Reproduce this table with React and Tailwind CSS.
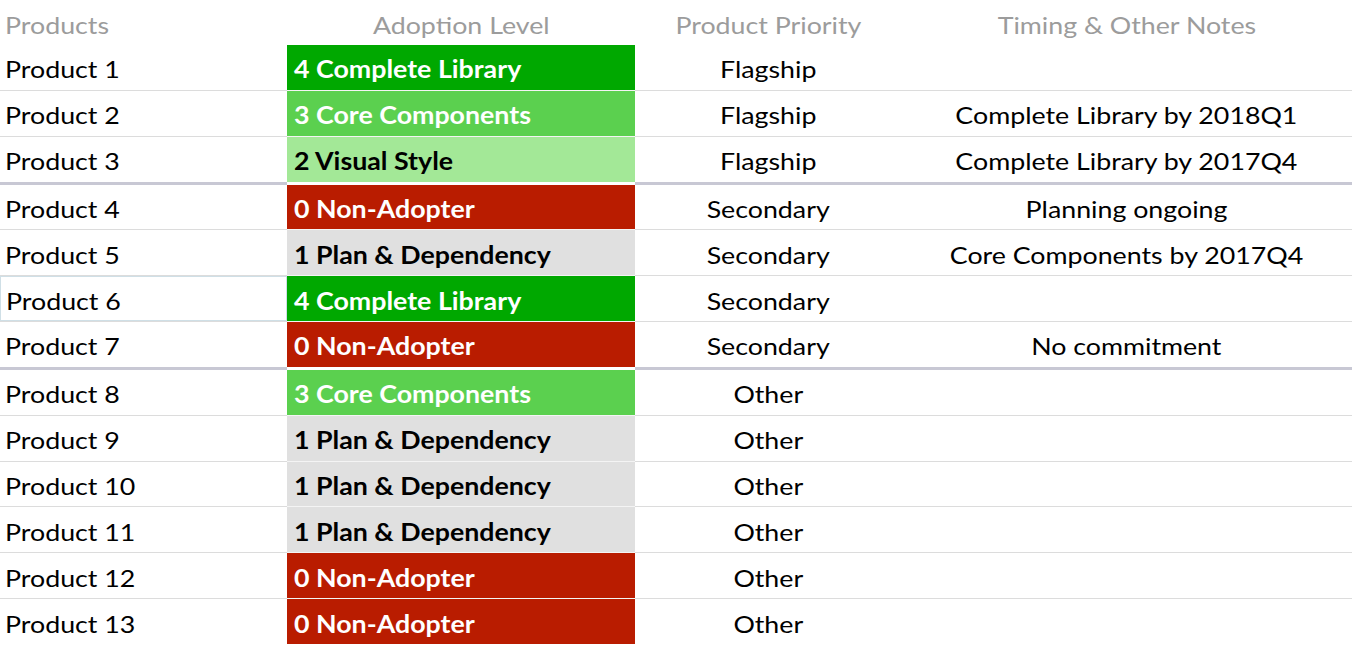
import React from "react";

const LEVELS = {
  4: { label: "4 Complete Library", cls: "bg-[#00a800] text-white" },
  3: { label: "3 Core Components", cls: "bg-[#5bd04f] text-white" },
  2: { label: "2 Visual Style", cls: "bg-[#a3e897] text-black" },
  1: { label: "1 Plan & Dependency", cls: "bg-[#e0e0e0] text-black" },
  0: { label: "0 Non-Adopter", cls: "bg-[#b91c00] text-white" },
};

const rows = [
  { name: "Product 1", level: 4, priority: "Flagship", note: "" },
  { name: "Product 2", level: 3, priority: "Flagship", note: "Complete Library by 2018Q1" },
  { name: "Product 3", level: 2, priority: "Flagship", note: "Complete Library by 2017Q4", thick: true },
  { name: "Product 4", level: 0, priority: "Secondary", note: "Planning ongoing" },
  { name: "Product 5", level: 1, priority: "Secondary", note: "Core Components by 2017Q4" },
  { name: "Product 6", level: 4, priority: "Secondary", note: "", selected: true },
  { name: "Product 7", level: 0, priority: "Secondary", note: "No commitment", thick: true },
  { name: "Product 8", level: 3, priority: "Other", note: "" },
  { name: "Product 9", level: 1, priority: "Other", note: "" },
  { name: "Product 10", level: 1, priority: "Other", note: "" },
  { name: "Product 11", level: 1, priority: "Other", note: "" },
  { name: "Product 12", level: 0, priority: "Other", note: "" },
  { name: "Product 13", level: 0, priority: "Other", note: "", last: true },
];

function L({ children }) {
  return (
    <span className="inline-block origin-left scale-x-[1.115] translate-y-[1.5px] whitespace-nowrap">
      {children}
    </span>
  );
}
function C({ children }) {
  return (
    <span className="inline-block origin-center scale-x-[1.115] translate-y-[1.5px] whitespace-nowrap">
      {children}
    </span>
  );
}

export default function App() {
  return (
    <div className="w-[1352px] h-[650px] bg-white font-['Lato',sans-serif] text-[24px] leading-none text-black overflow-hidden">
      <div className="grid grid-cols-[287px_348px_266px_1fr] h-[45px] items-center text-[#9c9c9c]">
        <div className="pl-[5px]"><L>Products</L></div>
        <div className="text-center"><C>Adoption Level</C></div>
        <div className="text-center"><C>Product Priority</C></div>
        <div className="text-center"><C>Timing &amp; Other Notes</C></div>
      </div>
      {rows.map((r) => {
        const lv = LEVELS[r.level];
        const border = r.last
          ? "border-b-0"
          : r.thick
          ? "border-b-[3px] border-[#c8c8d4]"
          : "border-b border-[#dcdcdc]";
        const adoptBorder = r.last
          ? "border-b-0"
          : r.thick
          ? "border-b-[3px] border-white"
          : "border-b border-[#f4f4f4]";
        return (
          <div key={r.name} className="grid grid-cols-[287px_348px_266px_1fr]">
            <div className={`${border} h-[44.85px] box-content`}>
              <div
                className={`h-full flex items-center pl-[5px] ${
                  r.selected ? "border border-[#cfdfe6]" : ""
                }`}
              >
                <L>{r.name}</L>
              </div>
            </div>
            <div className={`${adoptBorder} ${lv.cls} h-[44.85px] box-content flex items-center pl-[7px] font-bold`}>
              <L>{lv.label}</L>
            </div>
            <div className={`${border} h-[44.85px] box-content flex items-center justify-center`}>
              <C>{r.priority}</C>
            </div>
            <div className={`${border} h-[44.85px] box-content flex items-center justify-center`}>
              <C>{r.note}</C>
            </div>
          </div>
        );
      })}
    </div>
  );
}
